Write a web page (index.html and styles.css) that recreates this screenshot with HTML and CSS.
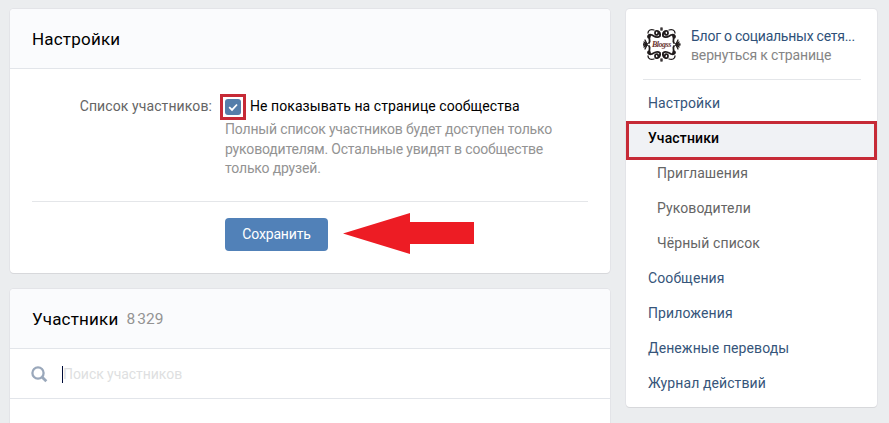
FILE: index.html
```html
<!DOCTYPE html>
<html lang="ru">
<head>
    <meta charset="UTF-8">
    <meta name="viewport" content="width=device-width, initial-scale=1.0">
    <title>Участники</title>
    <link rel="stylesheet" href="styles.css">
</head>
<body>
    <div class="page">
        <div class="content">
            <!-- Settings -->
            <div class="block settings">
                <h2 class="block-header">Настройки</h2>
                <form class="settings-form">
                    <div class="row">
                        <span class="label">Список участников:</span>
                        <div class="field">
                            <div class="check-line">
                                <span class="check-mark">
                                    <span class="checkbox">
                                        <svg width="16" height="16" viewBox="0 0 16 16"><path d="M4.2 8.2l2.8 2.7 5-5.4" fill="none" stroke="#fff" stroke-width="1.8"/></svg>
                                    </span>
                                </span>
                                <span class="check-text">Не показывать на странице сообщества</span>
                            </div>
                            <p class="hint">
                                Полный список участников будет доступен только<br>
                                руководителям. Остальные увидят в сообществе<br>
                                только друзей.
                            </p>
                        </div>
                    </div>
                    <div class="actions">
                        <button type="button" class="btn">Сохранить</button>
                        <svg class="arrow" width="132" height="42" viewBox="0 0 132 42"><path d="M0 20.5L67 0v9h64v22H67v10z" fill="#ed1c24"/></svg>
                    </div>
                </form>
            </div>

            <!-- Members -->
            <div class="block members">
                <h2 class="block-header">Участники<span class="count">8<i></i>329</span></h2>
                <div class="search">
                    <svg width="17" height="17" viewBox="0 0 17 17" fill="none" stroke="#9aa8bb" stroke-width="2.3"><circle cx="7" cy="7" r="5.6"/><path d="M11 11l4.3 4.3" stroke-width="2.8"/></svg>
                    <span class="caret"></span>
                    <span class="placeholder">Поиск участников</span>
                </div>
            </div>
        </div>

        <!-- Right menu -->
        <div class="block menu">
            <div class="group">
                <svg class="avatar" width="38" height="38" viewBox="0 0 38 38">
                    <g fill="none" stroke="#201b1c" stroke-width="1.8" stroke-linecap="round">
                        <g id="corner">
                            <path d="M17 10c1-5-5-7-5-3 0 3 4 2 3 0M17 10c-3 3-6 0-8-1-4-1-5 2-3 3M7 10c-2 4 1 4-1 7"/>
                            <path d="M11 4C8 3 5 4 5 7M18 2v2M1 16l3 3H0M2 14l2 4" stroke-width="1.3"/>
                        </g>
                        <use href="#corner" transform="translate(37 0) scale(-1 1)"/>
                        <use href="#corner" transform="translate(0 37) scale(1 -1)"/>
                        <use href="#corner" transform="translate(37 37) scale(-1 -1)"/>
                    </g>
                    <text x="9" y="21" class="avatar-text">Blogss</text>
                </svg>
                <div class="group-info">
                    <a class="group-name">Блог о социальных сетя...</a>
                    <a class="group-back">вернуться к странице</a>
                </div>
            </div>
            <ul class="nav">
                <li>Настройки</li>
                <li class="active">Участники</li>
                <li class="sub">Приглашения</li>
                <li class="sub">Руководители</li>
                <li class="sub">Чёрный список</li>
                <li>Сообщения</li>
                <li>Приложения</li>
                <li>Денежные переводы</li>
                <li>Журнал действий</li>
            </ul>
        </div>
    </div>
</body>
</html>
```
FILE: styles.css
```css
* {
    box-sizing: border-box;
}

body {
    margin: 0;
    height: 423px;
    overflow: hidden;
    background: #ebedef;
    font-family: Roboto, "Open Sans", sans-serif;
    font-size: 14px;
    letter-spacing: 0.1px;
    color: #000;
}

.page {
    display: flex;
    align-items: flex-start;
    gap: 16px;
    padding: 9px 0 0 10px;
}

.content {
    width: 600px;
}

.block {
    background: #fff;
    border-radius: 4px;
    box-shadow: 0 1px 0 0 #d7d8db, 0 0 0 1px #e3e4e8;
}

.block-header {
    display: flex;
    align-items: center;
    height: 60px;
    margin: 0;
    padding: 0 22px;
    border-bottom: 1px solid #e2e5ea;
    border-radius: 4px 4px 0 0;
    background: #fafbfd;
    font-size: 17px;
    font-weight: 400;
    letter-spacing: 0.2px;
}

/* Settings */
.settings {
    height: 264px;
    margin-bottom: 16px;
}

.row {
    display: flex;
    height: 133px;
    margin: 0 22px;
    padding-top: 25px;
    border-bottom: 1px solid #e4e6e9;
}

.label {
    width: 180px;
    line-height: 25px;
    text-align: right;
    color: #656565;
}

.field {
    padding-left: 8px;
}

.check-line {
    display: flex;
    gap: 4px;
    line-height: 25px;
    letter-spacing: 0.07px;
    white-space: nowrap;
}

.check-mark {
    padding: 2px;
    border: 3px solid #c62a36;
}

.checkbox {
    display: block;
    width: 16px;
    height: 16px;
    border-radius: 3px;
    background: #557eaa;
}

.checkbox svg {
    display: block;
}

.hint {
    margin: 0 0 0 5px;
    line-height: 19.5px;
    letter-spacing: -0.17px;
    white-space: nowrap;
    color: #939393;
}

.actions {
    display: flex;
    align-items: flex-start;
    gap: 15px;
    padding: 11px 0 0 215px;
}

.btn {
    width: 103px;
    height: 33px;
    margin-top: 5px;
    padding: 0 0 1px;
    border: none;
    border-radius: 4px;
    background: #5181b8;
    font: inherit;
    letter-spacing: -0.15px;
    color: #fff;
}

/* Members */
.members {
    height: 134px;
    border-radius: 4px 4px 0 0;
    box-shadow: 0 0 0 1px #e3e4e8;
}

.count {
    margin-left: 8px;
    padding-top: 1px;
    font-size: 15.5px;
    letter-spacing: 0;
    color: #939393;
}

.count i {
    display: inline-block;
    width: 2px;
}

.search {
    display: flex;
    align-items: center;
    height: 50px;
    padding: 1px 0 0 21px;
    border-bottom: 1px solid #e2e5ea;
}

.caret {
    width: 1px;
    height: 17px;
    margin-left: 14px;
    background: #000c3a;
}

.placeholder {
    letter-spacing: -0.05px;
    color: #dedfe1;
}

/* Right menu */
.menu {
    width: 251px;
    height: 398px;
}

.group {
    display: flex;
    height: 71px;
    margin: 0 16px 0 17px;
    padding-top: 17px;
    border-bottom: 1px solid #e4e6e9;
}

.avatar {
    flex-shrink: 0;
}

.avatar-text {
    font: italic bold 8px "Liberation Serif", serif;
    letter-spacing: -0.5px;
    fill: #6b3430;
}

.group-info {
    display: flex;
    flex-direction: column;
    margin-left: 10px;
    padding-top: 1px;
    line-height: 19px;
    white-space: nowrap;
}

.group-name {
    letter-spacing: -0.25px;
    color: #2f5179;
}

.group-back {
    letter-spacing: -0.15px;
    color: #858585;
}

.nav {
    margin: 0;
    padding: 6px 0 0;
    list-style: none;
}

.nav li {
    height: 35px;
    padding-left: 22px;
    line-height: 35px;
    color: #36557a;
}

.nav .sub {
    padding-left: 31px;
    color: #656565;
}

.nav .active {
    height: 39px;
    margin-bottom: -4px;
    padding-left: 19px;
    border: 3px solid #c62a36;
    background: #f0f2f5;
    line-height: 29px;
    font-weight: 500;
    letter-spacing: 0.15px;
    color: #000;
}
```
